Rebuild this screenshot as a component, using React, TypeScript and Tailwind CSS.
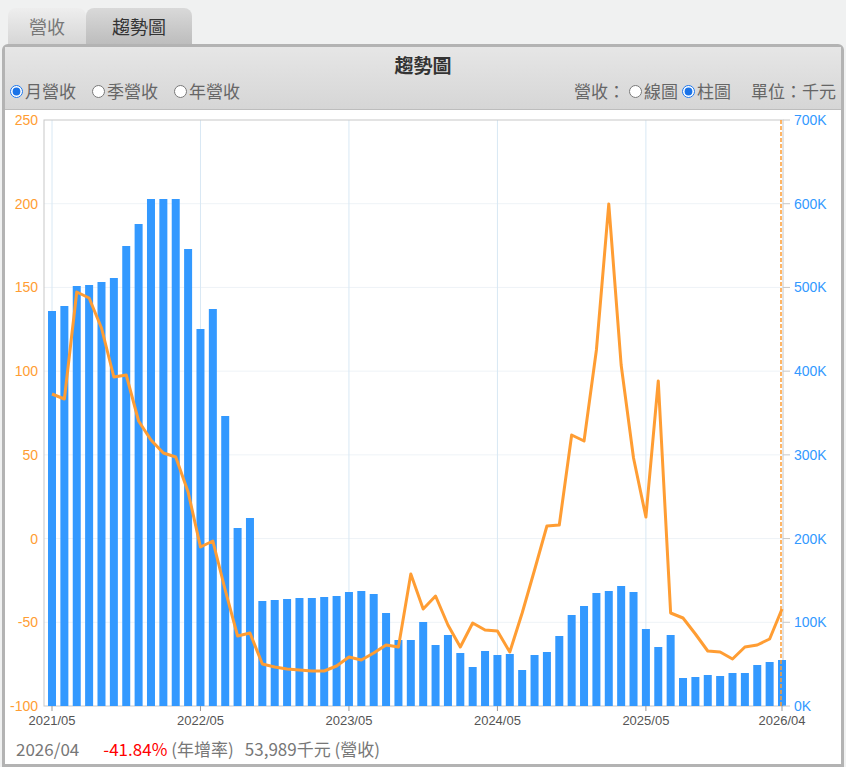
import React from "react";

const barTops = [311,306,286,285,282,278,246,224,199,199,199,249,329,309,416,528,518,601,600,599,598,598,597,596,592,591,594,613,640,640,622,645,635,653,667,651,655,654,670,655,652,636,615,606,593,591,586,592,629,647,635,678,677,675,676,673,673,665,662,660];
const lineY = [394,399,292,298,328,377,375,421,440,453,457,492,547,541,590,636,633,664,667,669,670,671,671,666,657,660,653,645,647,574,609,596,625,647,623,630,631,652,613,570,526,525,435,441,350,204,365,458,517,381,613,618,634,651,652,659,647,645,639,609];
const x0 = 52, step = (782 - 52) / 59;
const xs = (i: number) => x0 + i * step;
const leftTicks = [250,200,150,100,50,0,-50,-100];
const rightTicks = ["700K","600K","500K","400K","300K","200K","100K","0K"];
const yOf = (i: number) => 120 + i * (586 / 7);
const xlabels: [number, string][] = [[0,"2021/05"],[12,"2022/05"],[24,"2023/05"],[36,"2024/05"],[48,"2025/05"],[59,"2026/04"]];

export default function App() {
  const font = { fontFamily: "'Noto Sans CJK TC', 'Liberation Sans', sans-serif" };
  return (
    <div className="w-[846px] h-[767px] bg-[#f0f1f1] overflow-hidden" style={font}>
      <div className="flex pl-[8px] pt-[8px] h-[44px] items-end">
        <div className="w-[78px] h-[36px] rounded-t-[8px] bg-gradient-to-b from-[#eeeeee] to-[#d6d6d6] flex items-center justify-center text-[18px] text-[#777]">營收</div>
        <div className="w-[106px] h-[36px] rounded-t-[8px] bg-gradient-to-b from-[#d9d9d9] to-[#bdbdbd] flex items-center justify-center text-[18px] text-[#333] -skew-x-0">趨勢圖</div>
      </div>
      <div className="mx-[2px] h-[723px] border-[3px] border-[#b3b3b3] rounded-t-[6px] bg-white flex flex-col">
        <div className="h-[63px] bg-gradient-to-b from-[#e6e6e6] to-[#d6d6d6] border-b border-[#bdbdbd] relative">
          <div className="text-center text-[19px] font-bold text-[#333] pt-[4px] leading-[28px]">趨勢圖</div>
          <div className="flex items-center justify-between px-[5px] text-[17px] text-[#666] leading-[24px]">
            <div className="flex items-center gap-[16px]">
              <label className="flex items-center gap-[2px]"><input type="radio" defaultChecked name="p" className="w-[13px] h-[13px] accent-[#1a73e8]" />月營收</label>
              <label className="flex items-center gap-[2px]"><input type="radio" name="p" className="w-[13px] h-[13px]" />季營收</label>
              <label className="flex items-center gap-[2px]"><input type="radio" name="p" className="w-[13px] h-[13px]" />年營收</label>
            </div>
            <div className="flex items-center">
              <span className="mr-[4px]">營收：</span>
              <label className="flex items-center gap-[2px] mr-[4px]"><input type="radio" name="t" className="w-[13px] h-[13px]" />線圖</label>
              <label className="flex items-center gap-[2px]"><input type="radio" name="t" defaultChecked className="w-[13px] h-[13px] accent-[#1a73e8]" />柱圖</label>
              <span className="ml-[20px]">單位：千元</span>
            </div>
          </div>
        </div>
        <svg width="840" height="622" viewBox="5 110 840 622" className="block" style={{ fontFamily: "'Liberation Sans', sans-serif" }}>
          {[1,2,3,4,5,6].map(i => <line key={i} x1="44" x2="783" y1={yOf(i)} y2={yOf(i)} stroke="#eef3f7" />)}
          {xlabels.slice(0,5).map(([i]) => <line key={i} x1={xs(i)} x2={xs(i)} y1="120" y2="706" stroke="#d8e8f4" />)}
          <rect x="44" y="120" width="739" height="586" fill="none" stroke="#c8c8c8" />
          {barTops.map((t, i) => <rect key={i} x={xs(i) - 4} y={t} width="8" height={706 - t} fill="#3399ff" />)}
          <polyline points={lineY.map((y, i) => `${xs(i)},${y}`).join(" ")} fill="none" stroke="#ff9d33" strokeWidth="3" strokeLinejoin="round" />
          <line x1="781" x2="781" y1="120" y2="706" stroke="#ff9d33" strokeWidth="1.5" strokeDasharray="4 2" />
          {leftTicks.map((v, i) => <text key={v} x="38" y={yOf(i) + 5} fontSize="14" fill="#ff9d33" textAnchor="end">{v}</text>)}
          {rightTicks.map((v, i) => <g key={v}><line x1="783" x2="790" y1={yOf(i)} y2={yOf(i)} stroke="#c8c8c8" /><text x="794" y={yOf(i) + 5} fontSize="14" fill="#3399ff">{v}</text></g>)}
          {xlabels.map(([i, l]) => <g key={l}><line x1={xs(i)} x2={xs(i)} y1="706" y2="711" stroke="#999" /><text x={xs(i)} y="725" fontSize="13" fill="#555" textAnchor="middle">{l}</text></g>)}
          <rect x="99" y="738" width="7" height="10" fill="#ff9d33" />
          <rect x="266" y="738" width="7" height="10" fill="#3399ff" />
        </svg>
        <div className="h-[0px]" />
      </div>
      <div className="absolute top-[736px] left-[16px] flex items-baseline text-[17px] text-[#777]" style={font}>
        <span className="mr-[14px]">2026/04</span>
        <span className="ml-[10px] text-[#ff0000]">-41.84%</span>
        <span className="ml-[4px]">(年增率)</span>
        <span className="ml-[11px]">53,989千元 (營收)</span>
      </div>
    </div>
  );
}
